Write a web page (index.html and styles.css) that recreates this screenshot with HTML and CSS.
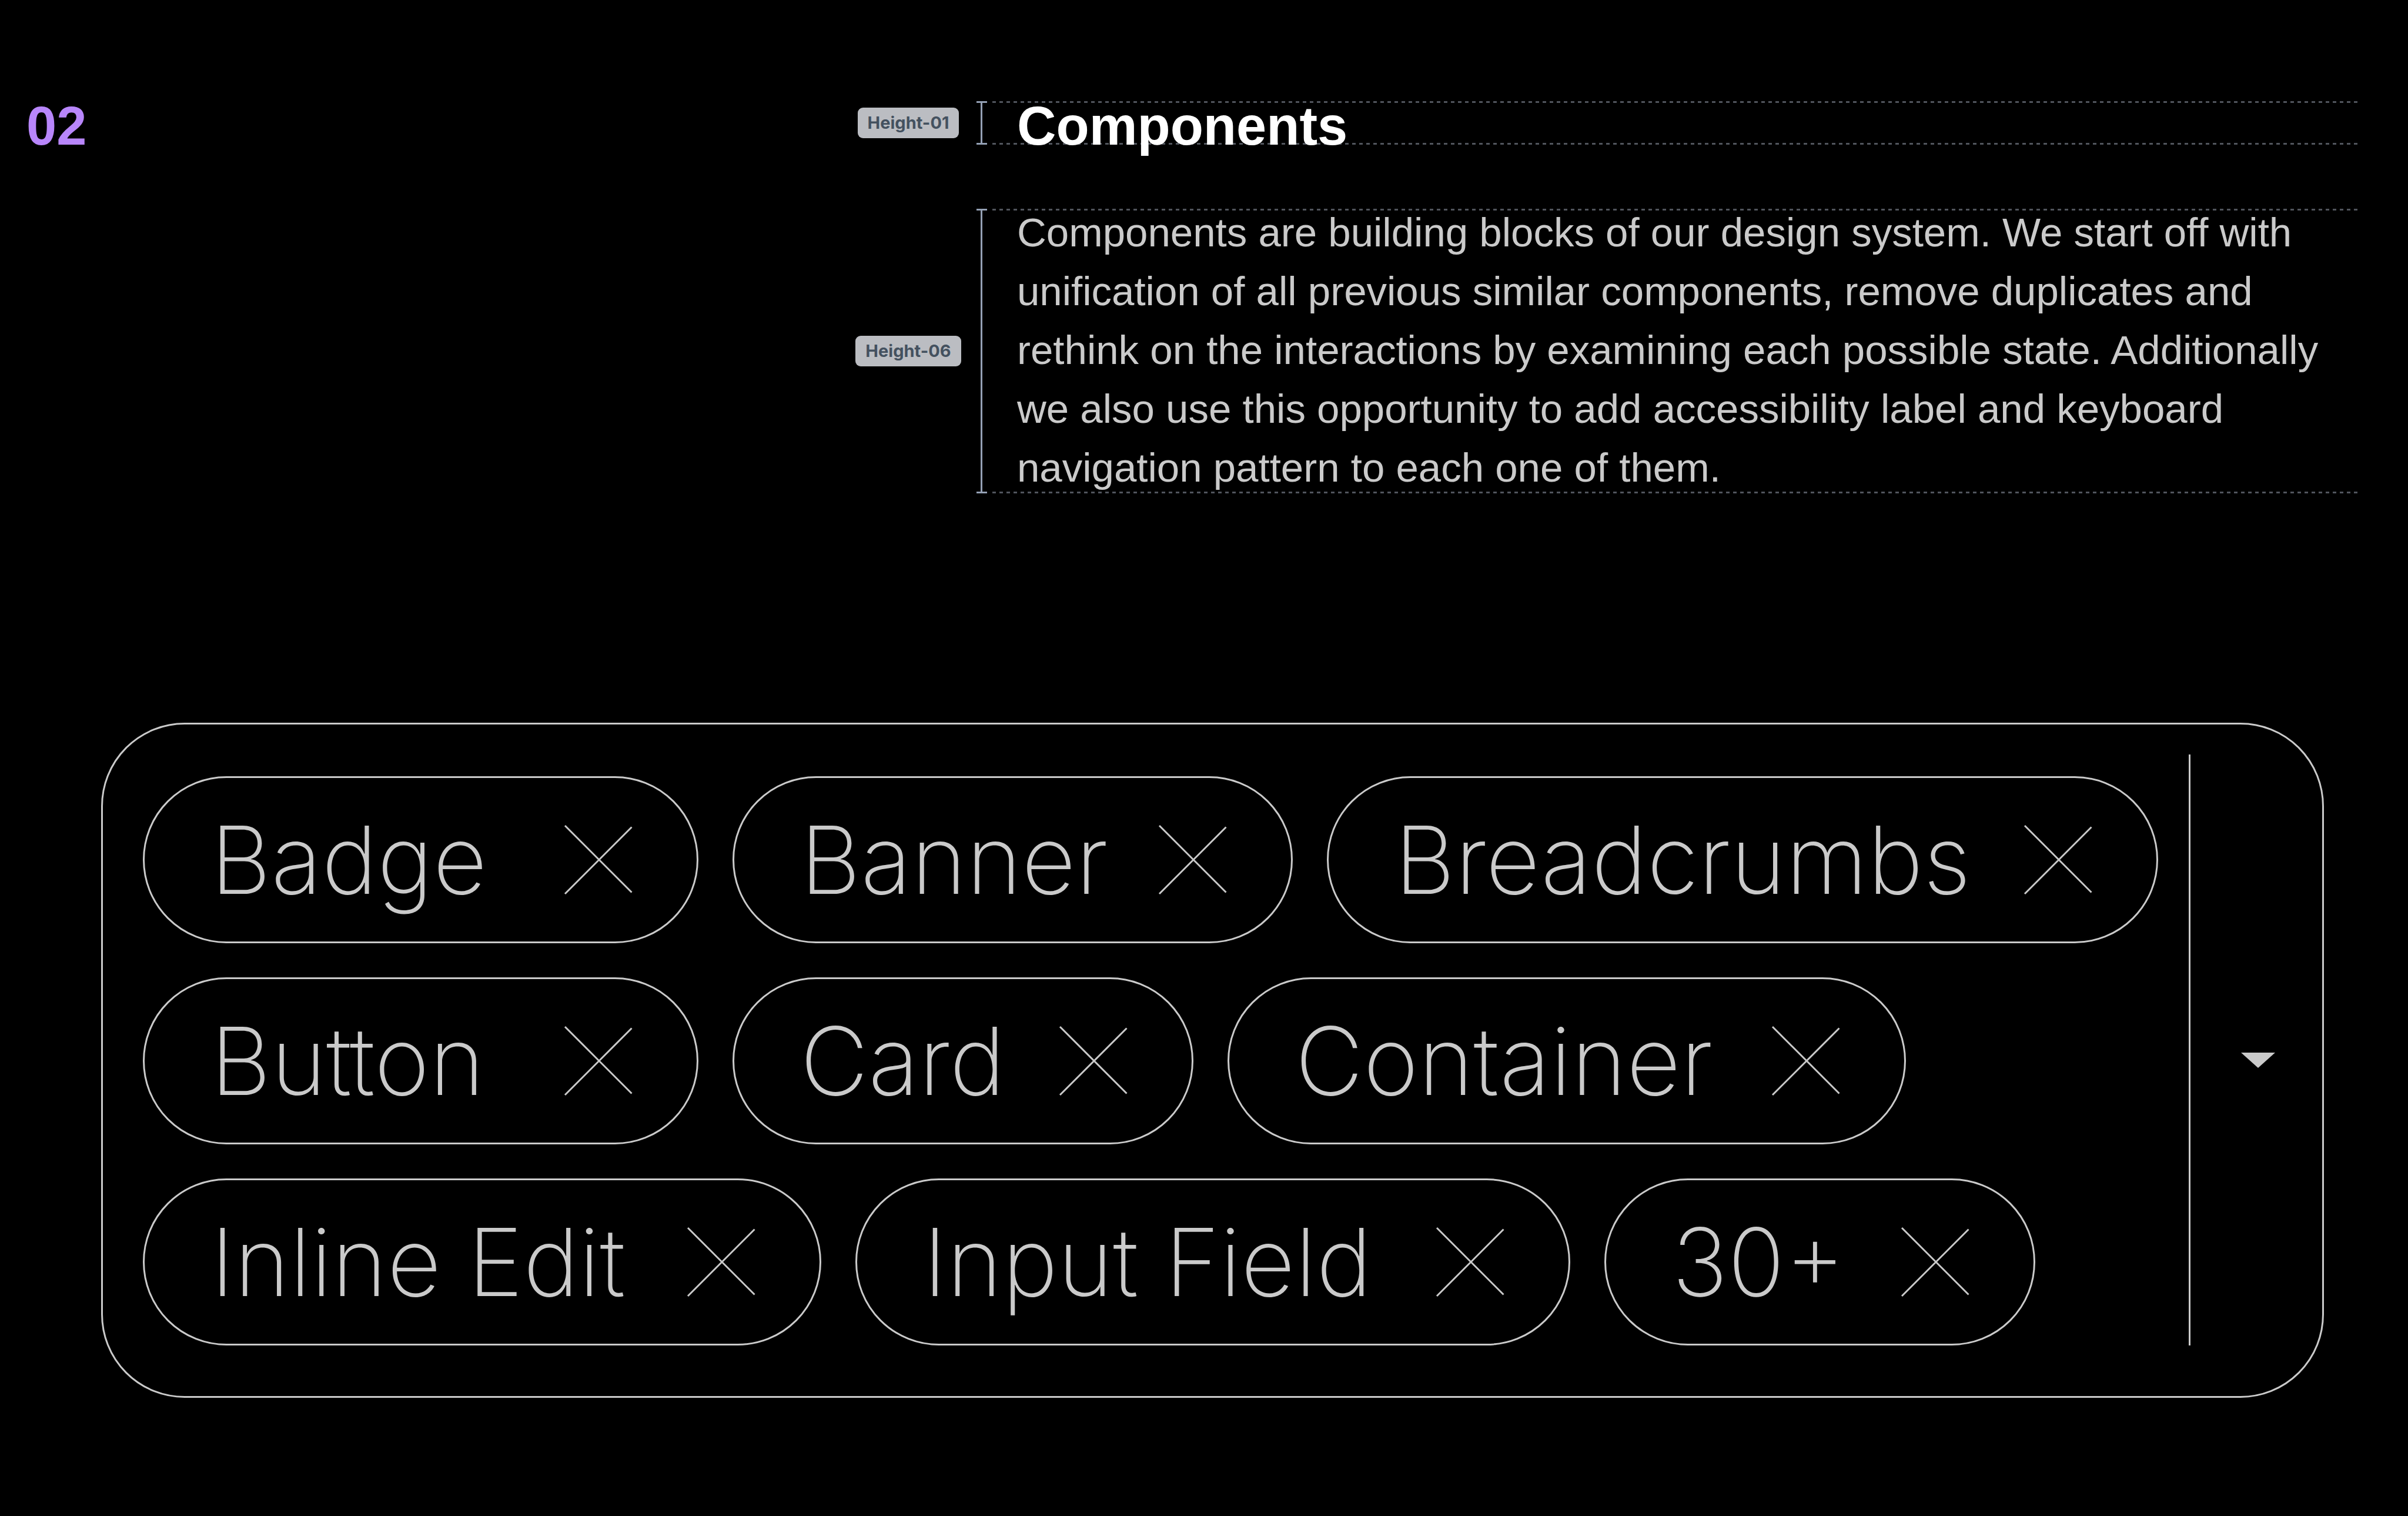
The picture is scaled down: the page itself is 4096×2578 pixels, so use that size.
FILE: index.html
```html
<!DOCTYPE html>
<html lang="en">
<head>
<meta charset="utf-8">
<title>Components</title>
<link rel="stylesheet" href="styles.css">
</head>
<body>
<svg class="sprite" aria-hidden="true">
  <symbol id="cross" viewBox="0 0 118 120"><path d="M2 2 115.500 115.500M2 118 115.500 4.500"/></symbol>
</svg>
<main class="page">
  <header class="intro">
    <p class="number">02</p>
    <div class="measures">
      <section class="measure">
        <div class="tag-cell"><span class="tag">Height-01</span></div>
        <div class="ruler"><h1 class="title">Components</h1></div>
      </section>
      <section class="measure">
        <div class="tag-cell"><span class="tag">Height-06</span></div>
        <div class="ruler">
          <p class="lead">Components are building blocks of our design system. We start off with<br>unification of all previous similar components, remove duplicates and<br>rethink on the interactions by examining each possible state. Additionally<br>we also use this opportunity to add accessibility label and keyboard<br>navigation pattern to each one of them.</p>
        </div>
      </section>
    </div>
  </header>

  <section class="picker" aria-label="Selected components">
    <ul class="chips">
      <li class="chip chip-s"><span>Badge</span><button class="remove" aria-label="Remove Badge"><svg><use href="#cross"/></svg></button></li>
      <li class="chip chip-banner"><span>Banner</span><button class="remove" aria-label="Remove Banner"><svg><use href="#cross"/></svg></button></li>
      <li class="chip chip-breadcrumbs"><span>Breadcrumbs</span><button class="remove" aria-label="Remove Breadcrumbs"><svg><use href="#cross"/></svg></button></li>
      <li class="chip chip-s"><span>Button</span><button class="remove" aria-label="Remove Button"><svg><use href="#cross"/></svg></button></li>
      <li class="chip chip-card"><span>Card</span><button class="remove" aria-label="Remove Card"><svg><use href="#cross"/></svg></button></li>
      <li class="chip chip-m"><span>Container</span><button class="remove" aria-label="Remove Container"><svg><use href="#cross"/></svg></button></li>
      <li class="chip chip-m"><span>Inline Edit</span><button class="remove" aria-label="Remove Inline Edit"><svg><use href="#cross"/></svg></button></li>
      <li class="chip chip-input"><span>Input Field</span><button class="remove" aria-label="Remove Input Field"><svg><use href="#cross"/></svg></button></li>
      <li class="chip chip-more"><span>30+</span><button class="remove" aria-label="Remove the other components"><svg><use href="#cross"/></svg></button></li>
    </ul>
    <div class="divider"></div>
    <button class="toggle" aria-label="Show all components"><svg class="caret" viewBox="0 0 58 26"><path d="M0 0H58L29 26Z"/></svg></button>
  </section>
</main>
</body>
</html>
```

FILE: styles.css
```css
:root {
  --ink: #cacaca;
  --bar: #94a0b4;
  --dash: #50545c;
}

* {
  box-sizing: border-box;
  margin: 0;
  padding: 0;
}

body {
  background: #000;
  color: var(--ink);
  font-family: "Liberation Sans", Arial, sans-serif;
}

button {
  border: 0;
  background: none;
  color: inherit;
  font: inherit;
  cursor: pointer;
}

.sprite {
  display: none;
}

.page {
  padding: 172px 0 200px;
}

/* Intro */

.intro {
  display: grid;
  grid-template-columns: 1384px 1fr;
  padding: 0 85px 0 45px;
}

.number,
.title {
  font-size: 92px;
  font-weight: 700;
  line-height: 84px;
}

.number {
  color: #b886fb;
}

.title {
  color: #fff;
  margin-bottom: -10px;
}

.measures {
  display: grid;
  gap: 109px;
}

.measure {
  display: grid;
  grid-template-columns: 232px 1fr;
}

.tag-cell {
  display: flex;
  align-items: center;
  justify-content: center;
}

.tag {
  padding: 0 17px;
  border-radius: 9px;
  background: #bbbdc2;
  color: #44515f;
  font-family: Inter, sans-serif;
  font-size: 29px;
  font-weight: 700;
  line-height: 52px;
}

/* Bracket on the left, dashed guides along the top and bottom */
.ruler {
  padding-left: 69px;
  background:
    linear-gradient(var(--bar), var(--bar)) 0 0 / 18px 3px no-repeat,
    linear-gradient(var(--bar), var(--bar)) 0 100% / 18px 3px no-repeat,
    linear-gradient(var(--bar), var(--bar)) 7px 0 / 3px 100% no-repeat,
    linear-gradient(#000, #000) 18px 0 / 6px 100% no-repeat,
    repeating-linear-gradient(90deg, var(--dash) 0 6px, transparent 6px 12px) 3px 0 / 100% 3px no-repeat,
    repeating-linear-gradient(90deg, var(--dash) 0 6px, transparent 6px 12px) 3px 100% / 100% 3px no-repeat;
}

.lead {
  margin: -9px 0 -7px;
  font-size: 69px;
  line-height: 100px;
  white-space: nowrap;
}

/* Picker */

.picker {
  display: grid;
  grid-template-columns: 1fr 3px 224px;
  margin: 390px 143px 0 172px;
  border: 3px solid var(--ink);
  border-radius: 142px;
}

.chips {
  display: flex;
  flex-wrap: wrap;
  gap: 58px;
  padding: 88px 48px 86px 68px;
  list-style: none;
}

.chip {
  display: flex;
  align-items: center;
  justify-content: space-between;
  height: 284px;
  padding: 0 108px 0 112px;
  border: 3px solid var(--ink);
  border-radius: 142px;
  font-family: Inter, sans-serif;
  font-size: 160px;
  font-weight: 200;
  font-optical-sizing: none;
  line-height: 200px;
  white-space: nowrap;
}

.chip-s { width: 945px; }
.chip-banner { width: 953px; }
.chip-breadcrumbs { width: 1414px; }
.chip-card { width: 784px; }
.chip-m { width: 1154px; }
.chip-input { width: 1216px; }
.chip-more { width: 733px; }

.remove,
.remove svg {
  display: block;
  width: 118px;
  height: 120px;
}

.remove svg {
  fill: none;
  stroke: currentColor;
  stroke-width: 3px;
}

.divider {
  margin: 51px 0 86px;
  background: var(--ink);
}

.toggle {
  display: flex;
  align-items: center;
  justify-content: center;
  padding-left: 6px;
}

.caret {
  width: 58px;
  height: 26px;
  fill: currentColor;
}
```
